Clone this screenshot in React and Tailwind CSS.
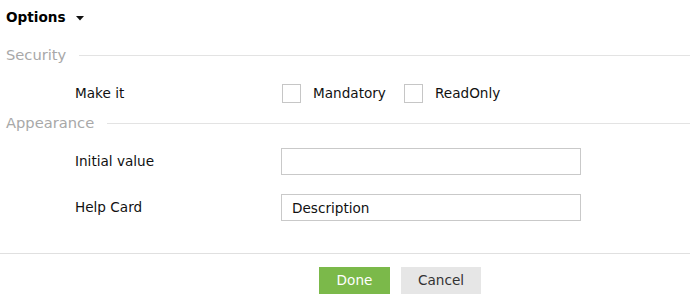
import React from 'react';

const SectionTitle = ({ label }) => (
  <div className="flex items-center h-[20px]">
    <span className="text-[14.7px] text-[#a8a8a8] pl-[6px] pr-[13px]">{label}</span>
    <div className="flex-1 border-t border-[#e3e3e3]" />
  </div>
);

export default function App() {
  return (
    <div className="w-[690px] h-[300px] bg-white text-[13.6px] text-[#111] overflow-hidden" style={{ fontFamily: '"DejaVu Sans", Verdana, sans-serif' }}>
      {/* Header */}
      <div className="flex items-center h-[20px] mt-[7px] pl-[6px]">
        <span className="font-bold text-black">Options</span>
        <svg className="ml-[10px] mt-[3px]" width="8" height="5" viewBox="0 0 8 5">
          <path d="M0 0h8L4 4.5z" fill="#111" />
        </svg>
      </div>

      {/* Security */}
      <div className="mt-[18px]">
        <SectionTitle label="Security" />
      </div>
      <div className="flex items-center h-[20px] mt-[18px]">
        <span className="w-[282px] pl-[75px]">Make it</span>
        <label className="flex items-center w-[122px]">
          <span className="w-[19px] h-[19px] border border-[#c6c6c6] bg-white" />
          <span className="ml-[12px]">Mandatory</span>
        </label>
        <label className="flex items-center">
          <span className="w-[19px] h-[19px] border border-[#c6c6c6] bg-white" />
          <span className="ml-[12px]">ReadOnly</span>
        </label>
      </div>

      {/* Appearance */}
      <div className="mt-[10px]">
        <SectionTitle label="Appearance" />
      </div>
      <div className="flex items-center mt-[15px]">
        <span className="w-[281px] pl-[75px]">Initial value</span>
        <input className="w-[300px] h-[27px] border border-[#c9c9c9] px-[10px] outline-none" />
      </div>
      <div className="flex items-center mt-[19px]">
        <span className="w-[281px] pl-[75px]">Help Card</span>
        <input className="w-[300px] h-[27px] border border-[#c9c9c9] px-[10px] outline-none text-[#111]" defaultValue="Description" />
      </div>

      {/* Footer */}
      <div className="mt-[32px] border-t border-[#e0e0e0] flex gap-[11px] pt-[13px] pl-[319px]">
        <button className="w-[71px] h-[27px] bg-[#7bb94a] text-white">Done</button>
        <button className="w-[80px] h-[27px] bg-[#e6e6e6] text-[#333]">Cancel</button>
      </div>
    </div>
  );
}
